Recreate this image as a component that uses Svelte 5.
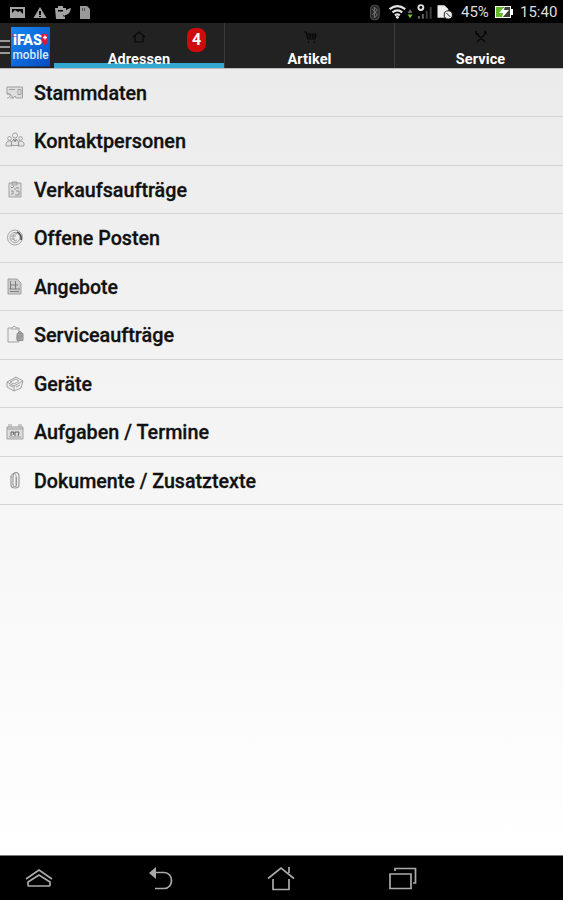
<script lang="ts">
	interface Tab {
		id: string;
		label: string;
		badge?: number;
	}

	interface Entry {
		id: string;
		label: string;
		width: number;
	}

	const tabs: Tab[] = [
		{ id: 'home', label: 'Adressen', badge: 4 },
		{ id: 'cart', label: 'Artikel' },
		{ id: 'tools', label: 'Service' }
	];

	const entries: Entry[] = [
		{ id: 'card', label: 'Stammdaten', width: 113 },
		{ id: 'people', label: 'Kontaktpersonen', width: 152 },
		{ id: 'clipboard', label: 'Verkaufsaufträge', width: 153 },
		{ id: 'coin', label: 'Offene Posten', width: 126 },
		{ id: 'document', label: 'Angebote', width: 84 },
		{ id: 'order', label: 'Serviceaufträge', width: 140 },
		{ id: 'box', label: 'Geräte', width: 58 },
		{ id: 'calendar', label: 'Aufgaben / Termine', width: 175 },
		{ id: 'clip', label: 'Dokumente / Zusatztexte', width: 222 }
	];

	let activeTab = $state('home');
</script>

<div class="screen">
	<div class="status">
		<svg class="notifications" viewBox="0 0 100 23">
			<path fill="#a3a3a3" fill-rule="evenodd" d="M10 7h15v11H10zM12 9v7h11V9z" />
			<path fill="#a3a3a3" d="M12 16v-3l3-3 3 2 2-1 3 3v2z" />
			<path fill="#a3a3a3" fill-rule="evenodd" d="M40 7l6.500 11h-13zM39 11v4h2v-4zM39 16v1h2v-1z" />
			<path fill="#a3a3a3" fill-rule="evenodd" d="M55 8h3V6h5v2h3v3l-3 5 2 1v2H56zM58 10v1.500h5V10z" />
			<path fill="#a3a3a3" d="M64 17c-1-5 2-8 7-9-1 5-3 7-6 7z" />
			<path fill="#999" d="M80 6h7l3 3v10H80z" />
			<path stroke="#555" d="M82.500 8v3m2-3v3" />
		</svg>
		<div class="system">
			<svg class="signals" viewBox="0 0 94 23">
				<rect x="1.500" y="5" width="9" height="15" rx="4" fill="#292929" stroke="#505050" />
				<path d="M3.500 9l5 6-3 3V7l3 3-5 5" fill="none" stroke="#777" />
				<g fill="none" stroke="#e4e4e4" stroke-width="2.300">
					<path d="M21 9q8-6 16 0M24 12.300q5-4 10 0M26.500 15.500q2.500-2 5 0" />
				</g>
				<circle cx="29" cy="17.500" r="1.500" fill="#eee" />
				<path fill="#686868" d="M39.500 13l2.500-4 2.500 4z" />
				<path fill="#74c82d" d="M39.500 14.500h5l-2.500 4z" />
				<circle cx="53" cy="7.500" r="2.500" fill="none" stroke="#ddd" stroke-width="2" />
				<path stroke="#666" stroke-width="2" d="M51 19v-3m4 3v-5" />
				<path stroke="#3e3e3e" stroke-width="2" d="M59 19v-8m4 8V7" />
				<path fill="#eee" d="M70 5h7l4 4v9H70z" />
				<circle cx="81" cy="15" r="4.200" fill="#eee" stroke="#111" />
				<path stroke="#222" d="M79 13l4 4" />
			</svg>
			<span class="percent">45%</span>
			<svg class="battery" viewBox="0 0 20 23">
				<path fill="#fff" d="M1 6h16v3h2v6h-2v3H1z" />
				<path fill="#65b827" d="M2 7h7v10H2z" />
				<path fill="#3b4234" d="M9 7h7v10H9z" />
				<path fill="#fff" d="M11 6l-6 7h4l-1 5 7-8h-5z" />
			</svg>
			<time>15:40</time>
		</div>
	</div>

	<header>
		<button class="brand" aria-label="iFAS mobile">
			<svg viewBox="0 0 54 45">
				<path d="M0 18h10M0 24h10M0 30h10" stroke="#999" stroke-width="1.800" />
				<defs>
					<linearGradient id="blue" x2="1" y2="1">
						<stop stop-color="#1689f4" />
						<stop offset="1" stop-color="#064bc2" />
					</linearGradient>
				</defs>
				<rect x="11" y="4" width="39" height="39.500" fill="url(#blue)" />
				<path fill="#b52543" d="M12.500 11h3v3h-3z" />
				<path fill="#d51c3a" d="M42 11h6v8l-3 3.500-3-3.500z" />
				<text x="13" y="21.500" textLength="29" lengthAdjust="spacingAndGlyphs" class="logo-name">iFAS</text>
				<path d="M43 14.500h4m-2-2v4" stroke="#fff" stroke-width="1.300" />
				<text x="12.500" y="35.500" textLength="36" lengthAdjust="spacingAndGlyphs" class="logo-sub">mobile</text>
			</svg>
		</button>
		<nav>
			{#each tabs as tab}
				<button class="tab" class:active={activeTab === tab.id} onclick={() => (activeTab = tab.id)}>
					<svg viewBox="0 0 14 14">
						{#if tab.id === 'home'}
							<path d="M1 7l6-5 6 5M3 6v6h8V6" />
						{:else if tab.id === 'cart'}
							<path d="M1 2h2l2 7h7l1-5H4M5 6h7M7 4v5m3-5v5" />
							<path d="M5 12h1m5 0h1" stroke-width="2" />
						{:else}
							<path d="M2 3l9 9M3 12l9-9M2 1v3h3M10 2l2-1m-2 2h3" stroke-width="1.500" />
						{/if}
					</svg>
					<span class="tab-label">{tab.label}</span>
					{#if tab.badge}
						<span class="badge">{tab.badge}</span>
					{/if}
				</button>
			{/each}
		</nav>
	</header>

	<main>
		{#each entries as entry}
			<button class="entry">
				<svg class="entry-icon" viewBox="0 0 20 20">
					{#if entry.id === 'card'}
						<path d="M2 4h15.500v11H11l-1-2-2 2-3-4H2z" fill="#ddd" />
						<path d="M4 6.500h6m3 0h3v5h-3zM2 11c4-1 4 3 1 4H2m3 0h4" />
					{:else if entry.id === 'people'}
						<circle cx="10" cy="4.500" r="2.500" />
						<circle cx="4.500" cy="7.500" r="1.900" />
						<circle cx="15.500" cy="7.500" r="1.900" />
						<path d="M7 10l2-2h2l2 2 1 4.500H6zM1 15v-3l2-2h3l1 5zm12 0l1-5h3l2 2v3z" fill="#e4e4e4" />
						<path d="M8.500 8.500l1.500 2 1.500-2" stroke="#444" />
					{:else if entry.id === 'clipboard'}
						<path d="M4 3h12v14H4zM7 2h5v3H7z" fill="#ddd" />
						<path d="M6 7l1 1 2-2m2 2h3M6 11h2v3H6m5-3h3v4h-4m0-7v2" stroke="#888" />
					{:else if entry.id === 'coin'}
						<circle cx="10" cy="9.500" r="7.500" fill="#eee" />
						<circle cx="10" cy="9.500" r="5" />
						<path d="M12 6q-4-1-4 3 0 5 4 3M6 8h5m-5 3h4" />
						<path d="M12 4q5 2 4 8" stroke="#555" stroke-width="1.800" />
					{:else if entry.id === 'document'}
						<path d="M3 2h9l4 4v11H3z" fill="#ccc" />
						<path d="M5.500 4v8m5-8v8M5 8h8m-9 4h11M5 14.500h9" stroke="#777" />
					{:else if entry.id === 'order'}
						<path d="M3 3h4l2-2 3 2h2v14H3zM6 4h7" fill="#eee" />
						<path d="M12 8.500h6v7h-6zM12 11h6m-5-3l2-2 2 2m-6 5h5" fill="#aaa" stroke="#888" />
					{:else if entry.id === 'box'}
						<path d="M2 8l9-5 7 4-2 7-7 3-7-4zM2 8l7 4 9-5M9 12v5" fill="#eee" />
						<path d="M5 8l6-3 3 2-5 3zM4 11l4 2m3 0l4-2" stroke="#999" />
					{:else if entry.id === 'calendar'}
						<path d="M2 5h16v12H2z" fill="#ddd" />
						<path d="M4 2v3m2-3v3m8-3v3m2-3v3M2 7h16M4 15h12" />
						<path d="M6 10v4m0-4h3l-1 3m2 1v-4h4l-1 4" stroke="#555" />
					{:else}
						<path d="M6 5v9c0 4 8 4 8 0V5c0-5-6-4-6 0v9c0 2 3.500 2 3.500 0V6" stroke-width="1.200" />
						<path d="M6 6c0-5 6-4 5 0v8" />
					{/if}
				</svg>
				<svg class="entry-text" width={entry.width} height="30" viewBox={`0 0 ${entry.width} 30`}>
					<text x="0" y="22" textLength={entry.width} lengthAdjust="spacingAndGlyphs">{entry.label}</text>
				</svg>
			</button>
		{/each}
	</main>

	<footer>
		<button aria-label="Apps">
			<svg viewBox="0 0 32 32"><path d="M3 16l13-9 13 9M16 12L5 19v3q0 1 1 1h20q1 0 1-1v-3z" /></svg>
		</button>
		<button aria-label="Zurück">
			<svg viewBox="0 0 32 32">
				<path d="M10 9.500h10c10 0 10 16 0 16H11" />
				<path d="M5 10l7-6v12z" class="solid" />
			</svg>
		</button>
		<button aria-label="Start">
			<svg viewBox="0 0 32 32"><path d="M3 15.500L16 5l13 10.500M8 16v10.500h16V16m0-6V4" /></svg>
		</button>
		<button aria-label="Übersicht">
			<svg viewBox="0 0 32 32"><path d="M4 11h21v14.500H4zM9 8V5.500h20.500V20H27" /></svg>
		</button>
	</footer>
</div>

<style>
	:global(body) {
		margin: 0;
		background: #000;
	}

	.screen {
		width: 563px;
		height: 900px;
		display: flex;
		flex-direction: column;
		overflow: hidden;
		font-family: Roboto, sans-serif;
	}

	button {
		border: 0;
		padding: 0;
		background: none;
		font: inherit;
		color: inherit;
	}

	svg {
		display: block;
		flex: none;
	}

	.status {
		height: 23px;
		display: flex;
		justify-content: space-between;
		background: #000;
		color: #ddd;
	}

	.notifications {
		width: 100px;
		height: 23px;
	}

	.system {
		display: flex;
		width: 194px;
		line-height: 24px;
	}

	.signals {
		width: 92px;
		height: 23px;
	}

	.percent {
		width: 33px;
		font-size: 15px;
	}

	.battery {
		width: 20px;
		height: 23px;
	}

	time {
		margin-left: 6px;
		font-size: 15px;
	}

	header {
		height: 45px;
		display: flex;
		background: #222;
		border-bottom: 1px solid #bbb;
	}

	.brand,
	.brand svg {
		width: 54px;
		height: 45px;
	}

	.logo-name {
		font: 900 14px Roboto, sans-serif;
		fill: #fff;
	}

	.logo-sub {
		font: 500 12px Roboto, sans-serif;
		fill: #d9ebff;
	}

	nav {
		flex: 1;
		display: grid;
		grid-template-columns: 171px 170px 1fr;
	}

	.tab {
		position: relative;
		height: 45px;
		display: flex;
		flex-direction: column;
		align-items: center;
		box-sizing: border-box;
		border-right: 1px solid #3a3a3a;
		padding-top: 7px;
		color: #fff;
	}

	.tab:last-child {
		border-right: 0;
		padding-left: 3px;
	}

	.tab.active {
		background: linear-gradient(#222 40px, #33a9d2 40px);
	}

	.tab svg {
		width: 14px;
		height: 14px;
		fill: none;
		stroke: #080808;
		stroke-width: 1.2;
	}

	.tab-label {
		margin-top: 7px;
		font-size: 14.5px;
		line-height: 17px;
		font-weight: 700;
		letter-spacing: 0.1px;
	}

	.badge {
		position: absolute;
		top: 5px;
		left: 133px;
		width: 19px;
		height: 24px;
		border-radius: 8px;
		background: #cf0b0c;
		font-size: 16px;
		line-height: 24px;
		font-weight: 700;
		text-align: center;
	}

	main {
		flex: 1;
		background: linear-gradient(#ebebeb, #fff);
	}

	.entry {
		width: 100%;
		height: 48.5px;
		display: flex;
		align-items: center;
		box-sizing: border-box;
		border-bottom: 1px solid #d5d5d5;
		padding: 1px 0 0 5px;
	}

	.entry:first-child {
		height: 48px;
	}

	.entry-icon {
		width: 20px;
		height: 20px;
		fill: none;
		stroke: #999;
		stroke-width: 0.9;
	}

	.entry-text {
		margin-left: 9px;
		overflow: visible;
		font-size: 20px;
		font-weight: 500;
		fill: #111;
		stroke: #111;
		stroke-width: 0.3;
	}

	footer {
		height: 45px;
		flex: none;
		display: flex;
		gap: 89px;
		box-sizing: border-box;
		padding: 7px 0 0 23px;
		border-top: 1px solid #777;
		background: #000;
	}

	footer button,
	footer svg {
		width: 32px;
		height: 32px;
	}

	footer svg {
		fill: none;
		stroke: #aaa;
		stroke-width: 1.7;
	}

	.solid {
		fill: #aaa;
		stroke: none;
	}
</style>
